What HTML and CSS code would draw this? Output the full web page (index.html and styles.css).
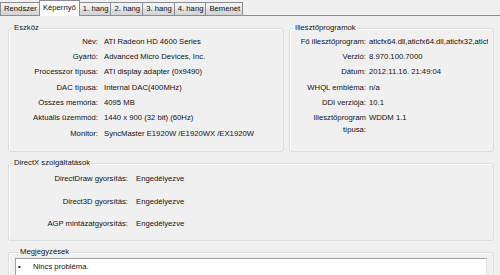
FILE: index.html
```html
<!DOCTYPE html>
<html lang="hu">
<head>
    <meta charset="UTF-8">
    <title>DirectX diagnosztikai eszköz – Képernyő</title>
    <link rel="stylesheet" href="styles.css">
</head>
<body>
    <div class="tabs">
        <div class="tab">Rendszer</div>
        <div class="tab active">Képernyő</div>
        <div class="tab">1. hang</div>
        <div class="tab">2. hang</div>
        <div class="tab">3. hang</div>
        <div class="tab">4. hang</div>
        <div class="tab">Bemenet</div>
    </div>

    <div class="page">
        <div class="top-row">
            <fieldset class="group device">
                <legend>Eszköz</legend>
                <div class="info">
                    <span class="label">Név:</span><span class="value">ATI Radeon HD 4600 Series</span>
                    <span class="label">Gyártó:</span><span class="value">Advanced Micro Devices, Inc.</span>
                    <span class="label">Processzor típusa:</span><span class="value">ATI display adapter (0x9490)</span>
                    <span class="label">DAC típusa:</span><span class="value">Internal DAC(400MHz)</span>
                    <span class="label">Összes memória:</span><span class="value">4095 MB</span>
                    <span class="label">Aktuális üzemmód:</span><span class="value">1440 x 900 (32 bit) (60Hz)</span>
                    <span class="label">Monitor:</span><span class="value">SyncMaster E1920W /E1920WX /EX1920W</span>
                </div>
            </fieldset>

            <fieldset class="group drivers">
                <legend>Illesztőprogramok</legend>
                <div class="info">
                    <span class="label">Fő illesztőprogram:</span><span class="value">aticfx64.dll,aticfx64.dll,aticfx32,aticfx32</span>
                    <span class="label">Verzió:</span><span class="value">8.970.100.7000</span>
                    <span class="label">Dátum:</span><span class="value">2012.11.16. 21:49:04</span>
                    <span class="label">WHQL embléma:</span><span class="value">n/a</span>
                    <span class="label">DDI verziója:</span><span class="value">10.1</span>
                    <span class="label">Illesztőprogram<br>típusa:</span><span class="value">WDDM 1.1</span>
                </div>
            </fieldset>
        </div>

        <fieldset class="group directx">
            <legend>DirectX szolgáltatások</legend>
            <div class="info">
                <span class="label">DirectDraw gyorsítás:</span><span class="value">Engedélyezve</span>
                <span class="label">Direct3D gyorsítás:</span><span class="value">Engedélyezve</span>
                <span class="label">AGP mintázatgyorsítás:</span><span class="value">Engedélyezve</span>
            </div>
        </fieldset>

        <fieldset class="group notes">
            <legend>Megjegyzések</legend>
            <ul class="notes-box">
                <li><span class="bullet">•</span>Nincs probléma.</li>
            </ul>
        </fieldset>
    </div>
</body>
</html>
```

FILE: styles.css
```css
:root {
    --bg: #f0f0f0;
    --text: #111111;
    --tab-border: #898c95;
    --group-border: #d5dfe5;
}

html, body {
    height: 275px;
    overflow: hidden;
}

body {
    margin: 0;
    background: var(--bg);
    color: var(--text);
    font-family: "Liberation Sans", Arial, sans-serif;
    font-size: 7.7px;
}

/* tab strip */
.tabs {
    display: flex;
    align-items: flex-end;
    height: 15px;
    border-bottom: 1px solid var(--tab-border);
}

.tab {
    height: 12px;
    line-height: 12px;
    padding: 0 2px 0 3px;
    border: 1px solid var(--tab-border);
    border-bottom: none;
    background: linear-gradient(#f3f3f3, #ebebeb 50%, #dedede 51%, #d4d4d4);
    white-space: nowrap;
}

.tab + .tab {
    margin-left: -1px;
}

.tab.active {
    height: 15px;
    line-height: 13px;
    margin-bottom: -1px;
    padding: 0 3px;
    background: #fff;
    position: relative;
}

/* tab page */
.page {
    display: flex;
    flex-direction: column;
    gap: 6px;
    padding: 7px 6px 0 8px;
}

.top-row {
    display: grid;
    grid-template-columns: 276px 205px;
    gap: 5px;
}

.group {
    margin: 0;
    padding: 0;
    border: 1px solid var(--group-border);
    border-radius: 3px;
    box-shadow: inset 1px 1px 0 #fff;
    box-sizing: border-box;
    min-width: 0;
}

.group legend {
    margin-left: 4px;
    padding: 0 1px;
    line-height: 10px;
}

.top-row .group {
    height: 129px;
}

.info {
    display: grid;
    align-content: start;
}

.info .label {
    text-align: right;
}

.info .value {
    white-space: nowrap;
    overflow: hidden;
    min-width: 0;
}

.device .info,
.drivers .info {
    padding-top: 1px;
    line-height: 12px;
}

.device .info span,
.drivers .info span {
    padding: 1.67px 0;
}

.device .info {
    grid-template-columns: 89px 1fr;
    column-gap: 6px;
    padding-right: 4px;
}

.drivers .info {
    grid-template-columns: 76px 1fr;
    column-gap: 3px;
    padding-right: 5px;
}

.directx {
    height: 83px;
}

.directx .info {
    grid-template-columns: 119px 1fr;
    grid-auto-rows: 22.5px;
    column-gap: 8px;
    line-height: 22.5px;
}

.notes {
    height: 40px;
    padding: 1px 6px 0;
}

.notes-box {
    margin: 0;
    padding: 3px 0 0 2px;
    height: 30px;
    list-style: none;
    background: #fff;
    border: 1px solid #a0a0a0;
    border-right-color: #e3e3e3;
    border-bottom-color: #e3e3e3;
}

.notes-box li {
    display: flex;
    line-height: 10px;
}

.bullet {
    width: 15px;
}
```
